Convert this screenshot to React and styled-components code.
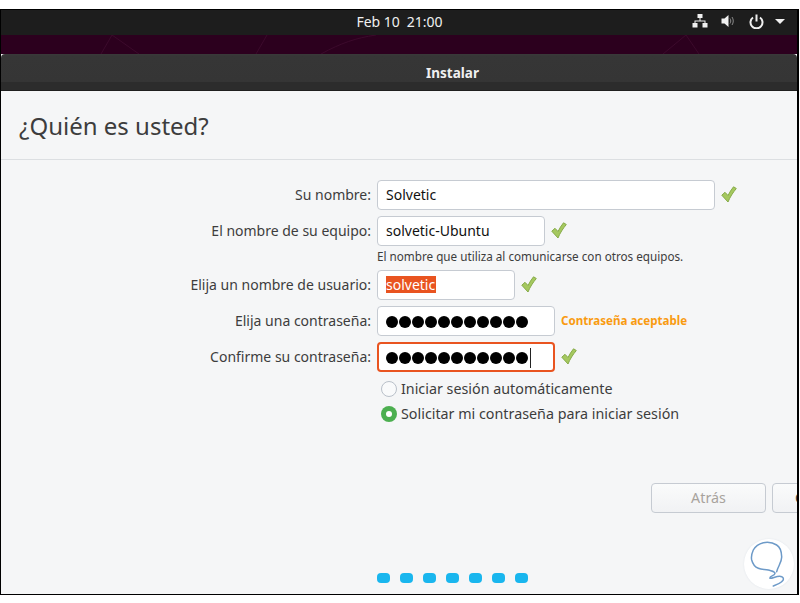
import React from "react";
import styled, { createGlobalStyle } from "styled-components";

const Global = createGlobalStyle`
  html, body { margin: 0; padding: 0; background: #fff; }
  body { font-family: "Noto Sans", "Open Sans", sans-serif; }
  * { box-sizing: border-box; }
`;
const Screen = styled.div`
  width: 800px; height: 603px; padding-top: 9px; background: #fff; overflow: hidden;
`;
const Frame = styled.div`
  position: relative; width: 799px; height: 586px; display: flex; flex-direction: column;
  border-style: solid; border-color: #000; border-width: 1px 2px 1px 1px; overflow: hidden; background: #f5f6f7;
`;
const TopBar = styled.div`
  height: 25px; flex: none; background: #1d1d1d; color: #f0f0f0; position: relative;
  display: flex; align-items: center; justify-content: center; font-size: 14px; padding-bottom: 2px;
`;
const Clock = styled.span` display: flex; gap: 7px; margin-left: 1px; `;
const Tray = styled.div`
  position: absolute; right: 12px; top: 0; height: 25px; padding-bottom: 3px; display: flex; align-items: center;
`;
const TrayIcon = styled.span`
  display: block; margin-left: ${p => p.$ml || 0}px;
  svg { display: block; }
`;
const Wallpaper = styled.div`
  height: 19px; flex: none; background: #2c001e; position: relative; overflow: hidden;
  svg { display: block; }
`;
const TitleBar = styled.div`
  height: 37px; flex: none; color: #f0f0f0; font-size: 13.5px; font-weight: 700;
  background: linear-gradient(#3a3a3a 0, #363636 2px, #353535 28px, #2c2c2c 28px, #2c2c2c 100%);
  border-radius: 4px 4px 0 0; border-bottom: 1px solid #1f1f1f;
  display: flex; align-items: center; justify-content: center; padding: 1px 0 0 107px;
`;
const Heading = styled.div`
  height: 69px; flex: none; padding: 15px 0 0 18px; border-bottom: 1px solid #dcdfe2;
  font-size: 24px; line-height: 40px; color: #3d3d3d;
`;
const Form = styled.div`
  flex: 1; display: grid; grid-template-columns: 370px 1fr; column-gap: 6px;
  padding-top: 20px; align-content: start; color: #3d3d3d; position: relative;
`;
const Label = styled.div`
  height: 30px; display: flex; align-items: center; justify-content: flex-end; font-size: 14px;
  padding-bottom: 2px; margin-top: ${p => p.$gap || 0}px;
`;
const Field = styled.div`
  display: flex; align-items: center; height: 30px; margin-top: ${p => p.$gap || 0}px;
`;
const Input = styled.div`
  width: ${p => p.$w}px; height: 30px; flex: none; display: flex; align-items: center;
  background: #fff; color: #111; font-size: 14px; border-radius: 4px;
  border: ${p => p.$focus ? "2px solid #e95420" : "1px solid #c6cbd2"};
  padding: 0 0 2px ${p => p.$focus ? 7 : 8}px;
`;
const Dots = styled.span` display: flex; gap: 1px; align-items: center; padding-top: 4px; `;
const Dot = styled.i` width: 12px; height: 12px; border-radius: 50%; background: #000; display: block; `;
const Caret = styled.i` width: 1px; height: 20px; background: #222; margin-left: 1px; display: block; `;
const Selected = styled.span` background: #e95420; color: #fff; line-height: 17px; padding-right: 1px; `;
const CheckWrap = styled.span`
  margin-left: 6px; width: 16px; height: 17px; display: block; flex: none; margin-top: -1px;
  svg { display: block; }
`;
const Hint = styled.div`
  grid-column: 2; font-size: 11.7px; height: 24px; padding-top: 2px; line-height: 16px;
  color: #3d3d3d;
`;
const Spacer = styled.div` grid-column: 1; height: ${p => p.$h || 24}px; margin-top: ${p => p.$gap || 0}px; `;
const Strength = styled.span`
  margin-left: 6px; color: #f99b11; font-size: 11.6px; font-weight: 700; padding-bottom: 1px;
`;
const RadioRow = styled.div`
  grid-column: 2; height: 25px; display: flex; align-items: center; gap: 4px; font-size: 14.3px; padding-left: 4px;
  margin-top: ${p => p.$gap || 0}px;
`;
const RadioMark = styled.span`
  width: 16px; height: 16px; border-radius: 50%; flex: none;
  background: ${p => p.$on ? "#4caf50" : "#f9fafb"};
  border: ${p => p.$on ? "none" : "1px solid #b9c0c9"};
  display: flex; align-items: center; justify-content: center;
  &::after { content: ""; width: 6px; height: 6px; border-radius: 50%; background: ${p => p.$on ? "#fff" : "transparent"}; }
`;
const RadioText = styled.span` padding-bottom: 1px; `;
const ButtonRow = styled.div`
  position: absolute; top: 323px; left: 650px; display: flex; gap: 6px;
`;
const Button = styled.div`
  width: 115px; height: 30px; flex: none; border-radius: 4px;
  border: 1px solid #c6cbd2; background: linear-gradient(#fafbfb, #f1f2f4);
  display: flex; align-items: center; font-size: 14.3px; padding-bottom: 2px;
  justify-content: ${p => p.$primary ? "flex-start" : "center"};
  padding-left: ${p => p.$primary ? 22 : 0}px;
  color: ${p => p.$primary ? "#3d3d3d" : "#a8a39d"};
`;
const Progress = styled.div`
  position: absolute; left: 376px; bottom: 11px; display: flex; gap: 10px;
`;
const Step = styled.i` width: 13px; height: 10px; border-radius: 4px; background: #19b6ee; display: block; `;
const Watermark = styled.div`
  position: absolute; left: 743px; bottom: 5px; width: 50px; height: 50px; border-radius: 50%;
  background: #fff; box-shadow: 0 0 2px #dfe4ea;
  svg { display: block; }
`;

const Check = () => (
  <svg width="16" height="17" viewBox="0 0 16 17">
    <path d="M0.800 9.200 L7 16 C9 11 12 6.500 15.300 2.500 L12.500 0.800 C10.300 3.500 8.500 6.500 7 9.500 L4 6.300 Z" fill="#a5c85f" stroke="#86ab49" strokeWidth="1" strokeLinejoin="round" />
  </svg>
);

const PasswordDots = ({ caret }) => (
  <Dots>
    {Array.from({ length: 11 }, (_, i) => <Dot key={i} />)}
    {caret && <Caret />}
  </Dots>
);

export default function App() {
  return (
    <Screen>
      <Global />
      <Frame>
        <TopBar>
          <Clock><span>Feb 10</span><span>21:00</span></Clock>
          <Tray>
            <TrayIcon>
              <svg width="16" height="14" viewBox="0 0 16 14" fill="#f0f0f0">
                <rect x="5.500" y="0" width="5" height="4" />
                <rect x="0.500" y="9" width="5" height="4.500" />
                <rect x="10.500" y="9" width="5" height="4.500" />
                <path d="M7.500 4h1v2.500h5V9h-1V7.500h-9V9h-1V6.500h5z" />
              </svg>
            </TrayIcon>
            <TrayIcon $ml={13}>
              <svg width="14" height="14" viewBox="0 0 14 14">
                <path d="M0.500 4.500h3L7.500 1v12L3.500 9.500h-3z" fill="#f0f0f0" />
                <path d="M9 4.500c1 1.500 1 3.500 0 5M11 3c1.700 2.500 1.700 5.500 0 8" fill="none" stroke="#8a8a8a" strokeWidth="1" />
              </svg>
            </TrayIcon>
            <TrayIcon $ml={14}>
              <svg width="15" height="15" viewBox="0 0 15 15" fill="none" stroke="#f0f0f0" strokeWidth="2">
                <path d="M4 3.500a6 6 0 1 0 7 0" />
                <path d="M7.500 0.500v7" />
              </svg>
            </TrayIcon>
            <TrayIcon $ml={11}>
              <svg width="10" height="5" viewBox="0 0 10 5" fill="#f0f0f0">
                <path d="M0 0h10L5 5z" />
              </svg>
            </TrayIcon>
          </Tray>
        </TopBar>
        <Wallpaper>
          <svg width="799" height="19" viewBox="0 0 799 19" fill="none" stroke="#3c0a2c" strokeWidth="1">
            <path d="M100 19 L111 0 L138 19" />
            <path d="M255 19 L266 0" />
            <path d="M320 19 C340 8 355 3 375 0" />
            <path d="M662 19 L685 0 L698 19" />
          </svg>
        </Wallpaper>
        <TitleBar>Instalar</TitleBar>
        <Heading>¿Quién es usted?</Heading>
        <Form>
          <Label>Su nombre:</Label>
          <Field><Input $w={338}>Solvetic</Input><CheckWrap><Check /></CheckWrap></Field>

          <Label $gap={6}>El nombre de su equipo:</Label>
          <Field $gap={6}><Input $w={168}>solvetic-Ubuntu</Input><CheckWrap><Check /></CheckWrap></Field>

          <Spacer />
          <Hint>El nombre que utiliza al comunicarse con otros equipos.</Hint>

          <Label>Elija un nombre de usuario:</Label>
          <Field><Input $w={138}><Selected>solvetic</Selected></Input><CheckWrap><Check /></CheckWrap></Field>

          <Label $gap={6}>Elija una contraseña:</Label>
          <Field $gap={6}><Input $w={178}><PasswordDots /></Input><Strength>Contraseña aceptable</Strength></Field>

          <Label $gap={6}>Confirme su contraseña:</Label>
          <Field $gap={6}><Input $w={178} $focus><PasswordDots caret /></Input><CheckWrap><Check /></CheckWrap></Field>

          <Spacer $h={25} $gap={4} />
          <RadioRow $gap={4}><RadioMark /><RadioText>Iniciar sesión automáticamente</RadioText></RadioRow>
          <Spacer $h={25} />
          <RadioRow><RadioMark $on /><RadioText>Solicitar mi contraseña para iniciar sesión</RadioText></RadioRow>

          <ButtonRow>
            <Button>Atrás</Button>
            <Button $primary>Continuar</Button>
          </ButtonRow>
        </Form>
        <Progress>
          {Array.from({ length: 7 }, (_, i) => <Step key={i} />)}
        </Progress>
        <Watermark>
          <svg width="50" height="50" viewBox="0 0 50 50" fill="none" stroke="#6d9ac8" strokeWidth="1.500" strokeLinecap="round">
            <path d="M32.700 32.700 C34 27 38 23 37.700 17.700 C37.500 12 36 8 32.700 6 C28 3 23 3 19.300 3.700 C14 5 11 8 9.300 11 C7.500 15 7 18 7.700 21 C9 26 11 28 14.300 29.300 C18 31 21 30 24.300 31 C27 32 31 32 31 34.300 C31 37 25 37 26 39.300 C28 40 34 36 37.700 37.700 C40 39 40 41 37.700 42.700 C35 45 32 46 29.300 47" />
          </svg>
        </Watermark>
      </Frame>
    </Screen>
  );
}
